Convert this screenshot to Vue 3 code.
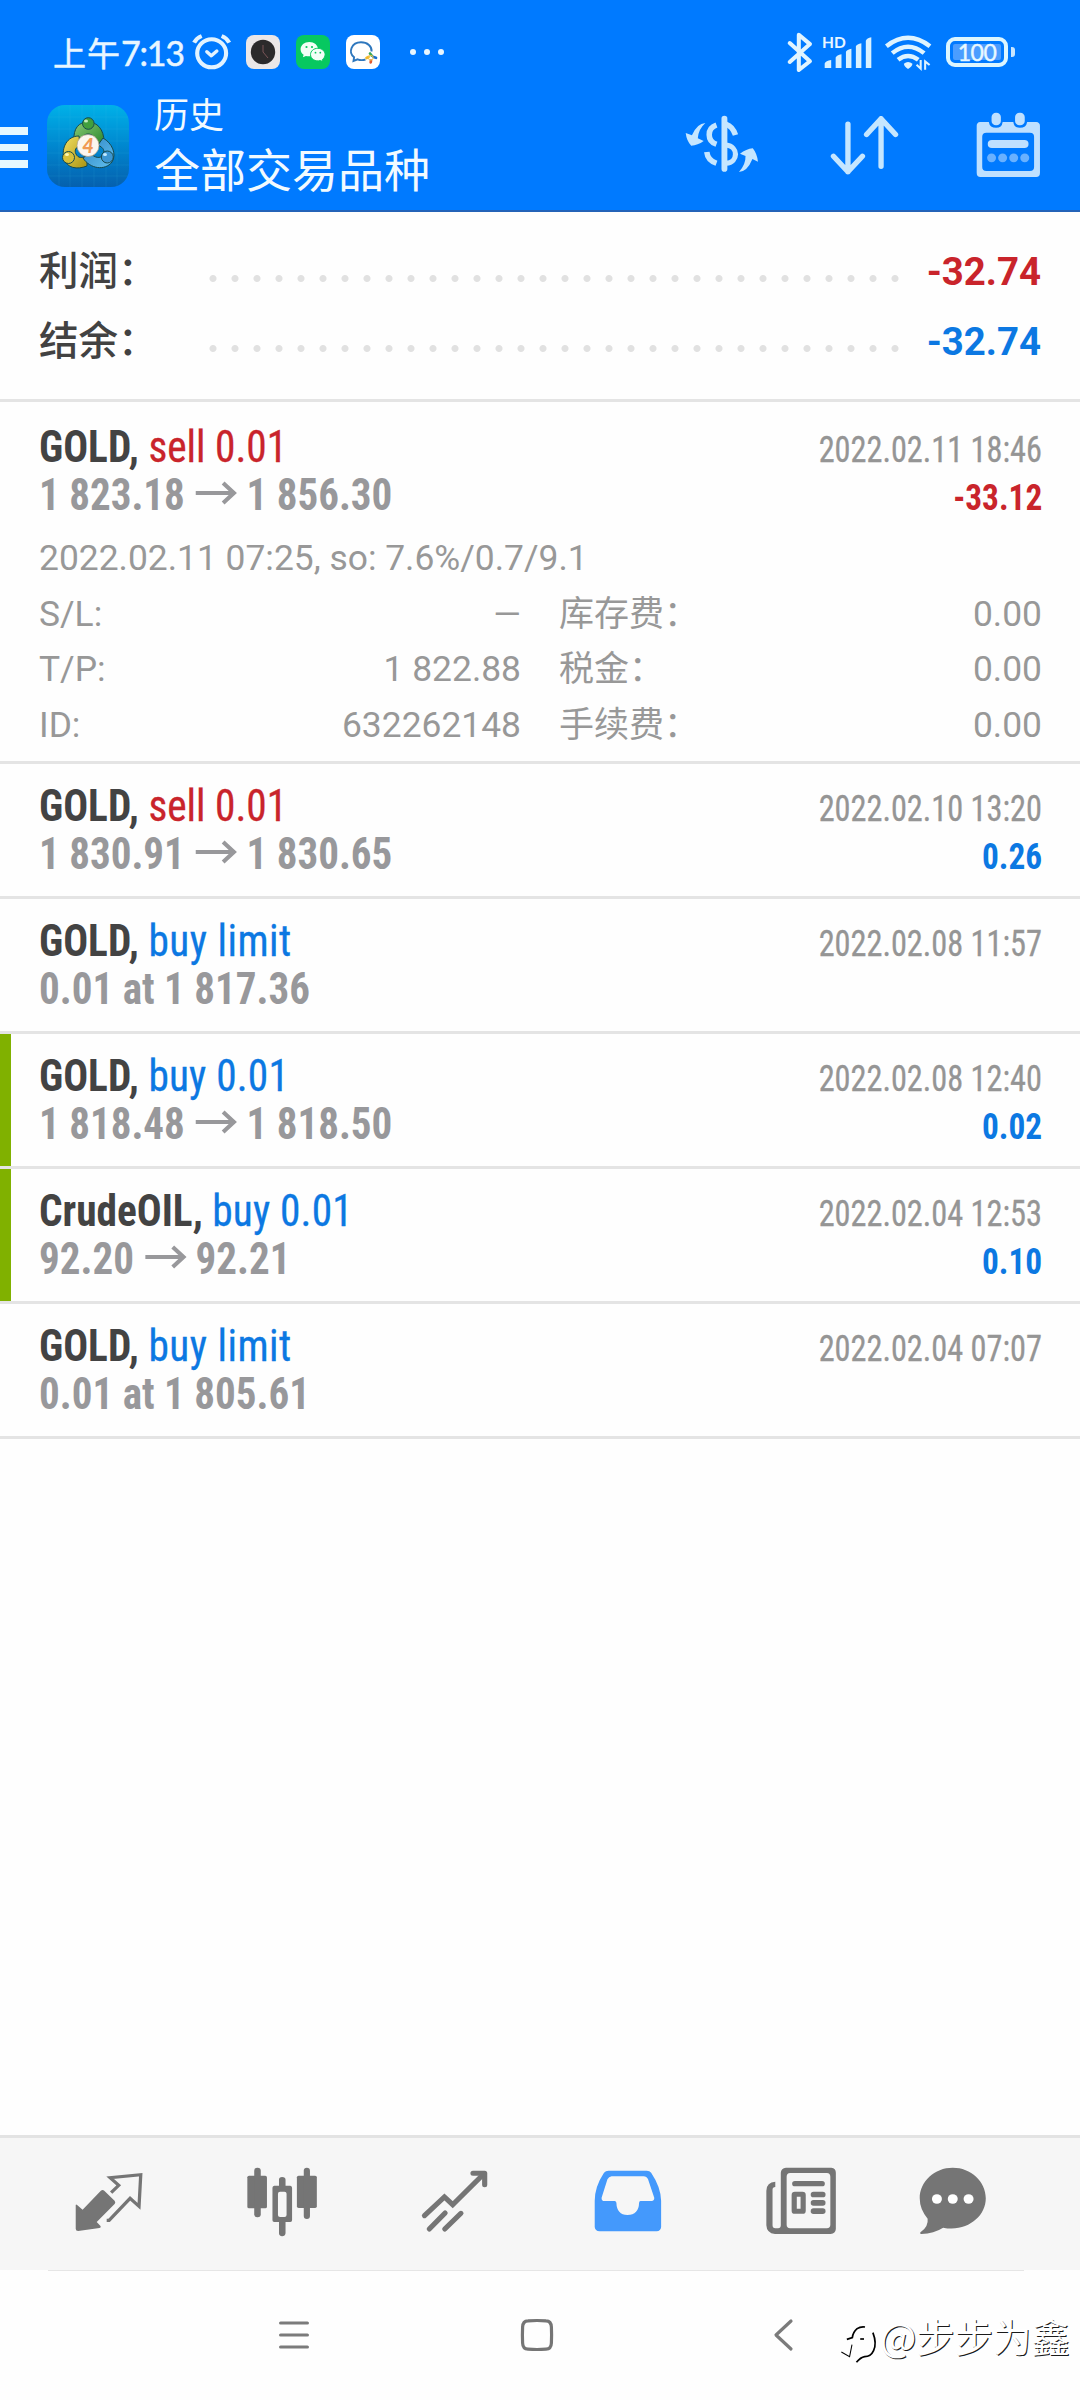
<script setup>
const summary = [
  { label: '利润：', value: '-32.74', tone: 'red' },
  { label: '结余：', value: '-32.74', tone: 'blue' },
]

const deals = [
  {
    symbol: 'GOLD,', action: 'sell 0.01', tone: 'red', from: '1 823.18', to: '1 856.30',
    time: '2022.02.11 18:46', profit: '-33.12', profitTone: 'red',
    note: '2022.02.11 07:25, so: 7.6%/0.7/9.1',
    details: [
      ['S/L:', '—', '库存费：', '0.00'],
      ['T/P:', '1 822.88', '税金：', '0.00'],
      ['ID:', '632262148', '手续费：', '0.00'],
    ],
  },
  { symbol: 'GOLD,', action: 'sell 0.01', tone: 'red', from: '1 830.91', to: '1 830.65', time: '2022.02.10 13:20', profit: '0.26', profitTone: 'blue' },
  { symbol: 'GOLD,', action: 'buy limit', tone: 'blue', from: '0.01 at 1 817.36', time: '2022.02.08 11:57' },
  { symbol: 'GOLD,', action: 'buy 0.01', tone: 'blue', from: '1 818.48', to: '1 818.50', time: '2022.02.08 12:40', profit: '0.02', profitTone: 'blue', marked: true },
  { symbol: 'CrudeOIL,', action: 'buy 0.01', tone: 'blue', from: '92.20', to: '92.21', time: '2022.02.04 12:53', profit: '0.10', profitTone: 'blue', marked: true },
  { symbol: 'GOLD,', action: 'buy limit', tone: 'blue', from: '0.01 at 1 805.61', time: '2022.02.04 07:07' },
]
</script>

<template>
  <div class="screen">
    <header class="header">
      <div class="status">
        <span class="time"><span class="ampm">上午</span>7:13</span>
        <svg class="alarm" viewBox="554 98 122 114" preserveAspectRatio="none" fill="none" stroke="#e2f3ff" stroke-linecap="round">
          <circle cx="614" cy="159" r="42" stroke-width="12" />
          <path d="M563 127 Q570 113 585 107M665 127 Q658 113 643 107" stroke-width="12" stroke-linecap="butt" />
          <path d="M600 154 L613 166 L629 152" stroke-width="10" stroke-linejoin="round" />
        </svg>
        <svg class="tile" viewBox="0 0 34 34">
          <rect width="34" height="34" rx="8" fill="#ebe7e7" />
          <circle cx="17" cy="17" r="12.2" fill="#2c2a2b" />
          <path d="M17 10V17L22 23" stroke="#7a5558" stroke-width="1" fill="none" />
        </svg>
        <svg class="tile" viewBox="0 0 34 34">
          <rect width="34" height="34" rx="8" fill="#07c860" />
          <path d="M13.3 7C8.400 7 4.600 10.200 4.600 14.200C4.600 16.500 5.800 18.400 7.600 19.700L6.900 22.300L9.900 20.900C15 22.500 22 19.700 22 14.200C22 10.200 18.200 7 13.300 7Z" fill="#f2fff7" />
          <path d="M21.800 13.300C17.700 13.300 14.500 16.100 14.500 19.600C14.500 24 19.400 27 24.500 25.500L27 26.800L26.400 24.500C28 23.300 29.100 21.600 29.100 19.600C29.100 16.100 25.900 13.300 21.800 13.300Z" fill="#f2fff7" stroke="#07c860" stroke-width="1" />
          <g fill="#07c860"><circle cx="10.500" cy="12" r="1.100" /><circle cx="16" cy="12" r="1.100" /><circle cx="19.500" cy="17.700" r=".9" /><circle cx="24.300" cy="17.700" r=".9" /></g>
        </svg>
        <svg class="tile" viewBox="0 0 34 34">
          <rect width="34" height="34" rx="8" fill="#fff" />
          <path d="M19.500 24.500C17 25.300 14 25.300 11.600 24.300L7.500 26L8.100 22.200C1.800 17 5.500 7.300 15 7.300C21.500 7.300 26 11.300 25.600 16.500" fill="none" stroke="#2e77bd" stroke-width="1.900" />
          <g stroke-width="2.700" stroke-linecap="round"><path d="M24 18.500L25.600 20.500" stroke="#36a65a" /><path d="M27.500 22L30 22.800" stroke="#1570d0" /><path d="M25 25.500L24.700 27.400" stroke="#e2592f" /><path d="M20.500 23L22.500 22" stroke="#f2b92c" /></g>
          <circle cx="24.800" cy="22.800" r="2.400" fill="none" stroke="#f1c144" stroke-width="1" />
        </svg>
        <svg class="more" viewBox="0 0 34 8" fill="#e8f6ff"><circle cx="3" cy="4" r="3" /><circle cx="17" cy="4" r="3" /><circle cx="31" cy="4" r="3" /></svg>

        <span class="spacer"></span>

        <svg class="bt" viewBox="708 94 80 122" preserveAspectRatio="none" fill="none" stroke="#e0f4ff" stroke-width="12" stroke-linejoin="round" stroke-linecap="round">
          <path d="M719 127L779 181L746 207V102L779 130L719 183" />
        </svg>
        <div class="cell">
          <span class="hd">HD</span>
          <svg class="bars" viewBox="824 110 140 94" preserveAspectRatio="none" fill="#d9f1ff">
            <path d="M826 204V190Q829 183 845 180V204ZM858 204V172Q861 165 875 162V204ZM888 204V155Q891 149 904 146V204ZM917 204V138Q920 132 933 129V204ZM946 204V121Q949 114 962 111V204Z" />
          </svg>
        </div>
        <svg class="wifi" viewBox="998 102 140 112" preserveAspectRatio="none" fill="none" stroke="#dff4ff" stroke-width="13">
          <path d="M1005 139Q1068 88 1132 139M1022 160Q1068 121 1115 160M1039 180Q1068 157 1098 180" />
          <path d="M1056 192Q1068 182 1081 192Q1080 201 1068 208Q1057 201 1056 192Z" fill="#dff4ff" stroke="none" />
          <path d="M1105 181V207L1093 195M1118 210V185L1131 196" stroke-width="6" />
        </svg>
        <div class="battery"><span>100</span></div>
        <i class="nub"></i>
      </div>

      <div class="bar">
        <div class="burger"><i></i><i></i><i></i></div>
        <svg class="logo" viewBox="0 0 82 82">
          <defs>
            <linearGradient id="tile" x1="0" y1="0" x2="0" y2="1"><stop offset="0" stop-color="#00b1e8" /><stop offset=".5" stop-color="#0087cf" /><stop offset="1" stop-color="#0560ae" /></linearGradient>
            <linearGradient id="green" x1="0" y1="0" x2="1" y2="1"><stop offset="0" stop-color="#8bcb78" /><stop offset="1" stop-color="#248329" /></linearGradient>
            <linearGradient id="yellow" x1="0" y1="0" x2="1" y2="1"><stop offset="0" stop-color="#f3df62" /><stop offset="1" stop-color="#a99412" /></linearGradient>
            <linearGradient id="sky" x1="0" y1="0" x2="1" y2="1"><stop offset="0" stop-color="#2d83c4" /><stop offset="1" stop-color="#62c1ee" /></linearGradient>
          </defs>
          <rect width="82" height="82" rx="18" fill="url(#tile)" />
          <path d="M12 1V81M23 0V82M35 0V82M47 0V82M59 0V82M70 1V81M1 12H81M0 24H82M0 36H82M0 48H82M0 60H82M1 71H81" stroke="#55c8ef" stroke-opacity=".14" stroke-width=".8" />
          <g stroke="#174a4d" stroke-width="1">
            <path d="M27 36C26 23 32 17 41 17C50 17 57 24 57 37L51 42C49 33 46 29 41 29C37 29 35 32 34 38Z" fill="url(#green)" />
            <path d="M32 31C20 31 14 43 17 54C20 63 30 65 40 61L40 50C35 54 31 53 29 49C27 45 29 42 33 41Z" fill="url(#yellow)" />
            <path d="M56 33C65 38 70 49 65 57C58 66 43 64 36 53L43 48C48 53 53 54 56 50C58 46 57 43 51 40Z" fill="url(#sky)" />
            <circle cx="41.300" cy="18.500" r="5.800" fill="#419f3e" /><circle cx="21.500" cy="52.500" r="6" fill="#d7c03a" /><circle cx="60.300" cy="52" r="6" fill="#3c96d2" />
          </g>
          <ellipse cx="39" cy="16" rx="2" ry="1.500" fill="#c4ecbd" /><ellipse cx="20" cy="49.500" rx="2" ry="1.500" fill="#fff6b0" /><ellipse cx="58" cy="49.500" rx="2" ry="1.500" fill="#c3eaff" />
          <circle cx="41" cy="40.500" r="11" fill="#fbf6ef" stroke="#a99b84" stroke-width=".7" />
          <text x="41" y="47.500" text-anchor="middle" class="four">4</text>
        </svg>
        <div class="titles">
          <div class="t1">历史</div>
          <div class="t2">全部交易品种</div>
        </div>
        <span class="spacer"></span>
        <svg class="i-dollar" viewBox="422 346 214 174" preserveAspectRatio="none" fill="none" stroke="#c5e6ff">
          <path d="M536 357V508" stroke-width="17" stroke-linecap="round" />
          <path d="M513 376C485 386 485 424 513 434" stroke-width="16" />
          <path d="M485 457C487 476 499 486 513 491" stroke-width="16" />
          <path d="M541 374Q559 380 568 406" stroke-width="16" />
          <path d="M541 436C577 440 577 488 541 491" stroke-width="15" />
          <path d="M481 370Q457 371 442 407L424 400Q427 425 440 438Q459 437 476 424L459 416Q461 388 481 370Z" fill="#c5e6ff" stroke="none" />
          <path d="M578 517Q602 516 617 478L633 486Q630 461 618 446Q599 448 581 462L597 469Q598 494 578 517Z" fill="#c5e6ff" stroke="none" />
        </svg>
        <svg class="i-sort" viewBox="844 346 200 182" preserveAspectRatio="none" fill="none" stroke="#c5e6ff" stroke-width="15.500" stroke-linecap="round" stroke-linejoin="round">
          <path d="M896 373V515M854 469L896 515L938 469M992 499V357M950 404L992 357L1034 404" />
        </svg>
        <svg class="i-cal" viewBox="1266 336 188 200" preserveAspectRatio="none">
          <path fill-rule="evenodd" fill="#bfe0ff" d="M1278 366H1303Q1306 384 1324 384Q1341 384 1343 366H1374Q1376 384 1393 384Q1411 384 1414 366H1440Q1451 367 1451 378V520Q1451 533 1440 533H1279Q1268 533 1268 520V378Q1268 367 1278 366ZM1296 399Q1284 399 1284 411V503Q1284 515 1296 515H1422Q1434 515 1434 503V411Q1434 399 1422 399Z" />
          <g fill="#bfe0ff"><rect x="1311" y="338" width="27" height="38" rx="13" /><rect x="1379" y="338" width="28" height="38" rx="13" /><rect x="1300" y="421" width="118" height="24" rx="12" /></g>
          <g fill="#69b1ff"><circle cx="1311" cy="475" r="13" /><circle cx="1343" cy="475" r="13" /><circle cx="1375" cy="475" r="13" /><circle cx="1407" cy="475" r="13" /></g>
        </svg>
      </div>
    </header>

    <section class="summary">
      <div v-for="row in summary" :key="row.label" class="sum-row">
        <span class="sum-label">{{ row.label }}</span>
        <span class="dots"></span>
        <span class="sum-value" :class="row.tone">{{ row.value }}</span>
      </div>
    </section>

    <section v-for="(d, i) in deals" :key="i" class="deal" :class="{ open: d.details, marked: d.marked }">
      <div class="line">
        <span class="name"><b>{{ d.symbol }}</b> <span class="action" :class="[d.tone, { pending: !d.to }]">{{ d.action }}</span></span>
        <span class="date">{{ d.time }}</span>
      </div>
      <div class="line">
        <span class="price">{{ d.from }}<template v-if="d.to"><svg class="arrow" viewBox="0 0 42 24" preserveAspectRatio="none" fill="none" stroke="#98989b" stroke-width="4.200"><path d="M0 12H38M28 2L39 12L28 22" /></svg>{{ d.to }}</template></span>
        <span class="profit" :class="d.profitTone">{{ d.profit }}</span>
      </div>
      <div v-if="d.details" class="details">
        <div class="note">{{ d.note }}</div>
        <div v-for="r in d.details" :key="r[0]" class="detail">
          <span>{{ r[0] }}</span><span class="val">{{ r[1] }}</span><span class="fee">{{ r[2] }}</span><span class="val">{{ r[3] }}</span>
        </div>
      </div>
    </section>

    <nav class="tabs">
      <svg class="tab" viewBox="214 138 204 213" preserveAspectRatio="none" fill="#757575">
        <path d="M219 255Q220 252 223 255L239 269L292 212Q297 208 302 212L332 242Q336 247 332 252L280 306L291 318Q294 322 288 324L226 333Q219 333 219 326Z" />
        <path d="M309 301H316L377 235L403 259L408 164L319 173L344 196L322 218" fill="none" stroke="#757575" stroke-width="9.500" />
      </svg>
      <svg class="tab" viewBox="714 138 204 213" preserveAspectRatio="none" fill="#757575">
        <rect x="715" y="167" width="57" height="98" rx="5" /><rect x="859" y="167" width="58" height="97" rx="5" />
        <rect x="735" y="143" width="19" height="149" rx="9" /><rect x="879" y="143" width="18" height="154" rx="9" />
        <path fill-rule="evenodd" d="M807 197V179Q807 171 816 171Q826 171 826 179V197H840Q845 198 845 203V301Q845 306 840 306H826V340Q825 349 816 349Q807 348 807 340V306H793Q788 306 788 301V203Q788 198 793 197ZM810 215Q804 215 804 221V285Q804 291 810 291H823Q829 291 829 285V221Q829 215 823 215Z" />
      </svg>
      <svg class="tab" viewBox="1218 138 204 213" preserveAspectRatio="none" fill="none" stroke="#757575" stroke-width="15" stroke-linecap="round">
        <path d="M1231 287L1289 231L1313 254L1403 162" stroke-linejoin="miter" />
        <path d="M1372 160H1406V194" stroke-linejoin="round" />
        <path d="M1245 327L1291 279M1290 327L1337 280" />
      </svg>
      <svg class="tab" viewBox="153 138 204 213" preserveAspectRatio="none">
        <path fill="#4499fc" fill-rule="evenodd" d="M198 152H309Q318 152 322 158Q350 201 351 242V321Q350 333 338 334H172Q159 333 158 321V242Q158 200 185 158Q190 152 198 152ZM207 169Q199 170 195 178L178 233Q177 243 187 243H216Q220 243 221 248Q222 284 253 285Q286 284 287 248Q287 243 291 243H323Q332 242 331 233L313 178Q309 169 300 169Z" />
      </svg>
      <svg class="tab" viewBox="655 138 204 213" preserveAspectRatio="none" fill="#757575">
        <path fill-rule="evenodd" d="M713 143H845Q858 144 858 158V327Q857 341 843 342H681Q657 340 656 316V212Q657 186 682 185V201Q674 202 674 209V316Q674 325 682 325H690Q698 325 698 316V158Q699 144 713 143ZM725 159Q715 160 715 170V314Q715 324 725 325H832Q842 324 842 314V170Q842 160 832 159Z" />
        <rect x="731" y="183" width="95" height="16" rx="8" /><rect x="785" y="215" width="43" height="17" rx="8" /><rect x="785" y="240" width="43" height="17" rx="8" /><rect x="785" y="265" width="43" height="17" rx="8" />
        <rect x="737" y="223" width="26" height="51" rx="2" fill="none" stroke="#757575" stroke-width="15" />
      </svg>
      <svg class="tab last" viewBox="1098 138 204 213" preserveAspectRatio="none" fill="#757575">
        <path d="M1199 143C1252 143 1295 184 1295 235C1295 290 1240 337 1171 323Q1144 341 1108 342Q1101 341 1106 336Q1129 319 1126 296Q1103 268 1103 235C1103 184 1146 143 1199 143Z" />
        <g fill="#fff"><circle cx="1153" cy="237" r="14.500" /><circle cx="1199" cy="237" r="14.500" /><circle cx="1245" cy="237" r="14.500" /></g>
      </svg>
    </nav>

    <div class="sysnav">
      <svg class="nav-menu" viewBox="0 0 30 32" stroke="#7b7b7b" stroke-width="3.200" stroke-linecap="round"><path d="M1.600 4H28.400M1.600 16H28.400M1.600 28H28.400" /></svg>
      <svg class="nav-home" viewBox="0 0 32 32" fill="none" stroke="#757575" stroke-width="3.200"><path d="M7 1.800Q16 1.200 25 1.800Q30.200 2 30.400 8Q30.800 16 30.400 24Q30.200 30 25 30.200Q16 30.800 7 30.200Q1.800 30 1.600 24Q1.200 16 1.600 8Q1.800 2 7 1.800Z" /></svg>
      <svg class="nav-back" viewBox="0 0 19 32" fill="none" stroke="#7b7b7b" stroke-width="3.200" stroke-linecap="round" stroke-linejoin="round"><path d="M17 2L2 16L17 30" /></svg>
      <div class="mark">
        <svg class="mark-logo" viewBox="872 614 108 120" preserveAspectRatio="none" fill="none" stroke="#000">
          <path d="M876 698L900 712L907 676" stroke-width="3" />
          <path d="M892 660L908 655Q910 638 922 628Q932 621 945 623" stroke-width="5" />
          <path d="M968 640Q980 672 970 694Q962 712 944 712Q932 714 920 729" stroke-width="5" />
          <path d="M931 659H942" stroke-width="5" />
        </svg>
        <span class="mark-text">@步步为鑫</span>
      </div>
    </div>
  </div>
</template>

<style>
body { background: #fff; }
</style>

<style scoped>
.screen {
  width: 1080px;
  height: 2400px;
  display: flex;
  flex-direction: column;
  background: #fefefe;
  overflow: hidden;
  font-family: Roboto, "Noto Sans CJK SC", sans-serif;
}
svg { display: block; flex: none; overflow: visible; }
.spacer { flex: 1; }
.red { color: #c9242b; }
.blue { color: #0c78e2; }

.header {
  height: 210px;
  flex: none;
  background: #007aff;
  border-bottom: 2px solid #2463b8;
}
.status {
  height: 84px;
  padding: 20px 65px 0 53px;
  box-sizing: border-box;
  display: flex;
  align-items: center;
  color: #e8f6ff;
}
.time {
  width: 138px;
  white-space: nowrap;
  font: 400 34px/40px Lato, "Noto Sans CJK SC", sans-serif;
  letter-spacing: -1.200px;
  -webkit-text-stroke: .5px #e8f6ff;
}
.ampm { font-family: "Noto Sans CJK SC", sans-serif; font-size: 33px; letter-spacing: 1px; }
.alarm { width: 42px; height: 38px; }
.tile { width: 34px; height: 34px; margin-left: 16px; }
.alarm + .tile { margin-left: 13px; }
.more { width: 34px; height: 8px; margin-left: 30px; }
.bt { width: 27px; height: 41px; }
.cell { width: 50px; height: 34px; margin-left: 10px; position: relative; }
.hd { position: absolute; left: -1px; top: 0; font: 700 15.500px/15px Lato, sans-serif; }
.bars { width: 48px; height: 31px; margin: 2px 0 0 1px; }
.wifi { width: 48px; height: 37px; margin-left: 11px; }
.battery {
  width: 62px;
  height: 30px;
  box-sizing: border-box;
  border: 4px solid #dcf6ff;
  border-radius: 9px;
  padding: 3px;
  margin-left: 14px;
}
.battery span {
  display: block;
  height: 16px;
  background: #4b9dff;
  border-radius: 2px;
  text-align: center;
  font: 400 23px/17px Lato, sans-serif;
  letter-spacing: -.500px;
  color: #e8f8ff;
  -webkit-text-stroke: .4px #e8f8ff;
}
.nub { width: 4px; height: 10px; margin: 0 0 0 3px; background: #c8e6ff; border-radius: 0 3px 3px 0; }

.bar { height: 126px; display: flex; align-items: flex-start; }
.burger { width: 28px; padding-top: 43px; display: flex; flex-direction: column; gap: 9px; }
.burger i { height: 7.500px; background: #e6f8ff; }
.logo { width: 82px; height: 82px; margin: 21px 0 0 19px; }
.four { font: italic 900 20px Lato, sans-serif; fill: #f09a55; }
.titles { margin: 6px 0 0 25px; color: #f2faff; font-family: "Noto Sans CJK SC", sans-serif; }
.t1 { font-size: 35px; line-height: 46px; }
.t2 { font-size: 46px; line-height: 62px; }
.i-dollar { width: 74px; height: 58px; margin: 31px 0 0; }
.i-sort { width: 69px; height: 61px; margin: 31px 0 0 71px; }
.i-cal { width: 65px; height: 66px; margin: 28px 39px 0 77px; }

.summary {
  height: 190px;
  flex: none;
  box-sizing: border-box;
  border-bottom: 3px solid #e4e4e4;
  padding: 21px 39px 0;
}
.sum-row { height: 70px; display: flex; align-items: baseline; line-height: 70px; font-size: 38.400px; }
.sum-label { width: 163px; font-size: 39.500px; font-weight: 500; color: #424242; font-family: "Noto Sans CJK SC", sans-serif; }
.dots {
  width: 704px;
  height: 7px;
  align-self: flex-end;
  margin: 0 0 21px;
  background: radial-gradient(circle at 11px 3.500px, #e1e1e1 3px, transparent 4px) 0 0 / 22px 7px repeat-x;
}
.sum-value { flex: 1; text-align: right; font-weight: 700; }

.deal {
  flex: none;
  height: 135px;
  box-sizing: border-box;
  padding: 18px 38px 0 39px;
  border-bottom: 3px solid #e4e4e4;
  position: relative;
}
.deal.open { height: 362px; padding-top: 21px; }
.deal.marked::before { content: ""; position: absolute; left: 0; top: 0; bottom: 0; width: 11px; background: #80b100; }
.line { height: 48px; display: flex; justify-content: space-between; align-items: baseline; font: 400 44px/48px "Roboto Condensed", Roboto, sans-serif; font-stretch: 75%; white-space: nowrap; }
.name { transform: scaleX(.939); transform-origin: left; }
.name b { color: #434343; }
.action { -webkit-text-stroke: .3px currentColor; }
.action.blue { letter-spacing: .200px; }
.action.pending { letter-spacing: .550px; }
.date { font-size: 36px; color: #959595; transform: scaleX(.897); transform-origin: right; -webkit-text-stroke: .3px #959595; }
.price { font-weight: 700; color: #98989b; transform: scaleX(.933); transform-origin: left; }
.arrow { display: inline-block; width: 44px; height: 24px; margin: 0 10px 0 12px; vertical-align: 5px; }
.profit { font-size: 36px; font-weight: 700; transform: scaleX(.925); transform-origin: right; }
.details { margin-top: 12px; color: #989898; font-size: 35.400px; line-height: 55.700px; }
.detail { display: grid; grid-template-columns: 241px 241px 241px 1fr; }
.val { text-align: right; }
.fee { padding-left: 38px; font-size: 35px; white-space: nowrap; }

.tabs {
  margin-top: auto;
  flex: none;
  height: 135px;
  box-sizing: border-box;
  border-top: 3px solid #e3e3e3;
  background: #f6f6f6;
  display: flex;
  gap: 102.800px;
  padding: 28px 0 0 73.700px;
}
.tab { width: 70.200px; height: 71px; }
.tab.last { margin-left: -20.500px; }
.sysnav {
  height: 130px;
  flex: none;
  display: flex;
  align-items: flex-start;
  background: linear-gradient(#e6e6e6, #e6e6e6) 48px 0 / 976px 1px no-repeat;
}
.nav-menu { width: 30px; height: 32px; margin: 49px 0 0 279px; }
.nav-home { width: 32px; height: 32px; margin: 49px 0 0 212px; }
.nav-back { width: 19px; height: 32px; margin: 49px 0 0 221px; }
.mark { display: flex; margin: 41px 0 0 47px; }
.mark-logo { width: 37px; height: 40px; margin-top: 13px; }
.mark-text {
  margin-left: 3px;
  font: 400 38.400px/48px "Noto Sans CJK SC", sans-serif;
  color: #fff;
  text-shadow: 1px 1px .5px #1a1a1a;
  white-space: nowrap;
}
</style>
